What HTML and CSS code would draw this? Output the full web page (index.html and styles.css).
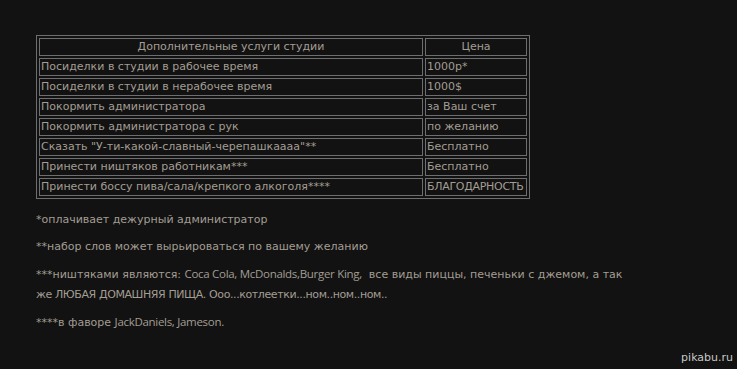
FILE: index.html
```html
<!DOCTYPE html>
<html lang="ru">
<head>
<meta charset="utf-8">
<title>Услуги студии</title>
<link rel="stylesheet" href="styles.css">
</head>
<body>
<div class="page">
  <table class="price" cellspacing="2">
    <tr><th class="c1">Дополнительные услуги студии</th><th class="c2">Цена</th></tr>
    <tr><td>Посиделки в студии в рабочее время</td><td>1000р*</td></tr>
    <tr><td>Посиделки в студии в нерабочее время</td><td>1000$</td></tr>
    <tr><td>Покормить администратора</td><td>за Ваш счет</td></tr>
    <tr><td>Покормить администратора с рук</td><td>по желанию</td></tr>
    <tr><td>Сказать "У-ти-какой-славный-черепашкаааа"**</td><td>Бесплатно</td></tr>
    <tr><td>Принести ништяков работникам***</td><td>Бесплатно</td></tr>
    <tr><td>Принести боссу пива/сала/крепкого алкоголя****</td><td class="wide">БЛАГОДАРНОСТЬ</td></tr>
  </table>
  <p class="note">*оплачивает дежурный администратор</p>
  <p class="note">**набор слов может вырьироваться по вашему желанию</p>
  <p class="note">***ништяками являются: <span class="alt">Coca Cola, McDonalds,Burger King,</span>&nbsp; все виды пиццы, печеньки с джемом, а так<br><span class="tight">же ЛЮБАЯ ДОМАШНЯЯ ПИЩА. Ооо...котлеетки...ном..ном..ном..</span></p>
  <p class="note">****в фаворе <span class="alt">JackDaniels, Jameson.</span></p>
  <div class="mark">pikabu.ru</div>
</div>
</body>
</html>
```
FILE: styles.css
```css
html, body {
  margin: 0;
  padding: 0;
  background: #121212;
}
.page {
  position: relative;
  width: 737px;
  height: 369px;
  box-sizing: border-box;
  padding: 35px 36px 0;
  font-family: "DejaVu Sans", sans-serif;
  font-size: 11px;
  color: #a39d92;
}
.price {
  border: 1px solid #6e6e6e;
  border-collapse: separate;
  border-spacing: 2px;
  width: 494px;
  table-layout: fixed;
}
.price th, .price td {
  border: 1px solid #6e6e6e;
  padding: 0 1px;
  height: 16px;
  line-height: 16px;
  font-weight: normal;
  white-space: nowrap;
  text-align: left;
  overflow: visible;
}
.price th { text-align: center; }
.price .c2 { width: 98px; }
.price .wide { letter-spacing: -0.3px; }
.note {
  margin: 11px 0 0;
  line-height: 20px;
}
.note + .note { margin-top: 7px; }
.alt {
  font-family: "Open Sans", sans-serif;
  font-size: 11.5px;
  letter-spacing: -0.3px;
}
.tight { letter-spacing: -0.4px; }
.mark {
  position: absolute;
  right: 4px;
  bottom: 5px;
  font-family: "DejaVu Sans", sans-serif;
  font-size: 11px;
  color: #c8c8c8;
}
```
